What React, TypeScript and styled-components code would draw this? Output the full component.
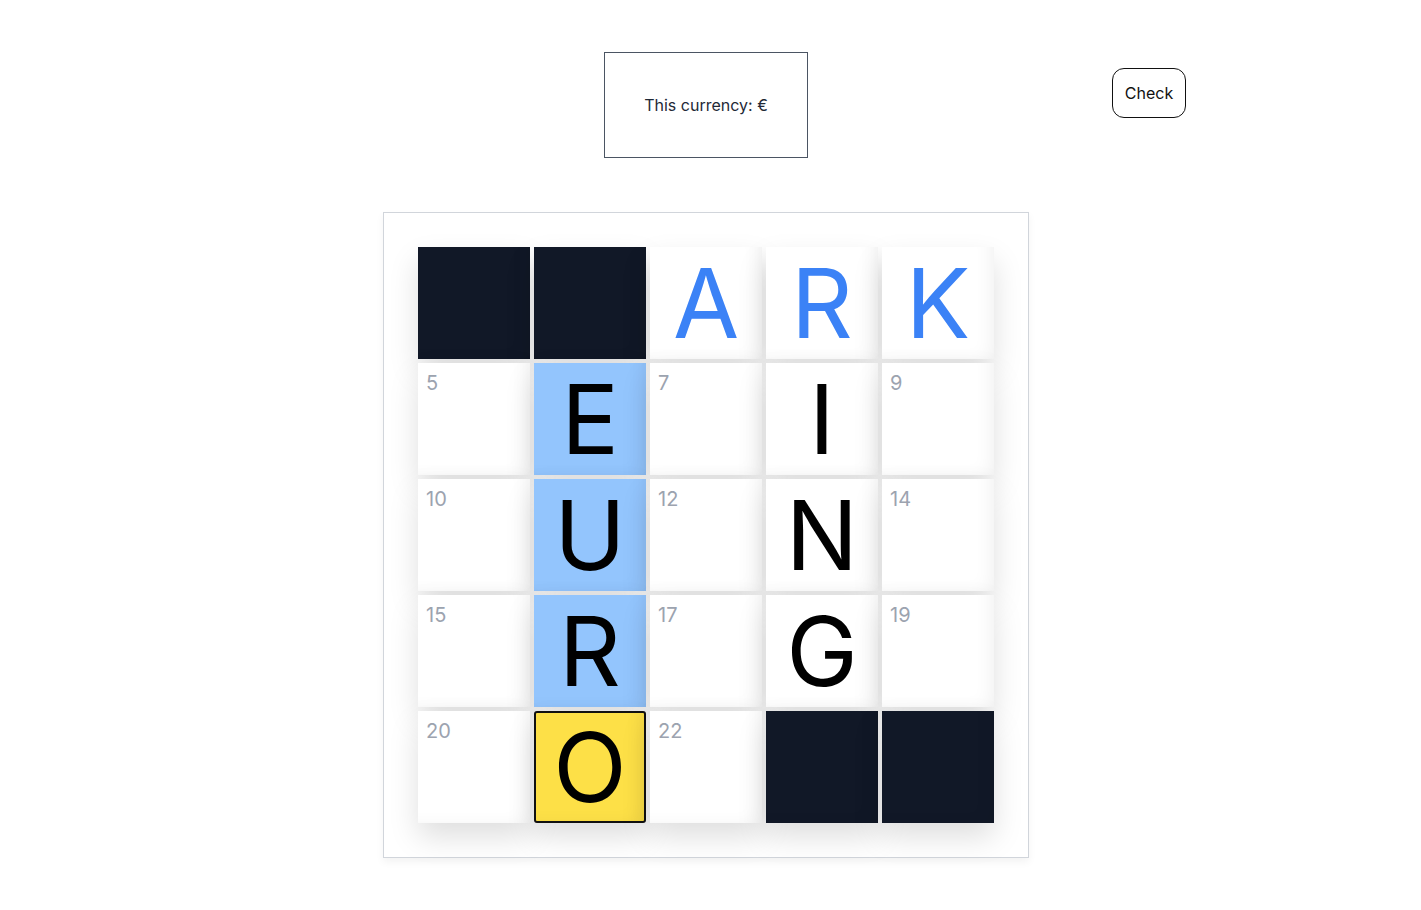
import styled, { createGlobalStyle } from "styled-components";

type CellKind = "block" | "open" | "across" | "active" | "current";

type Cell = {
  kind: CellKind;
  letter?: string;
  num?: number;
};

const rows: Cell[][] = [
  [
    { kind: "block" },
    { kind: "block" },
    { kind: "across", letter: "A" },
    { kind: "across", letter: "R" },
    { kind: "across", letter: "K" },
  ],
  [
    { kind: "open", num: 5 },
    { kind: "active", letter: "E" },
    { kind: "open", num: 7 },
    { kind: "open", letter: "I" },
    { kind: "open", num: 9 },
  ],
  [
    { kind: "open", num: 10 },
    { kind: "active", letter: "U" },
    { kind: "open", num: 12 },
    { kind: "open", letter: "N" },
    { kind: "open", num: 14 },
  ],
  [
    { kind: "open", num: 15 },
    { kind: "active", letter: "R" },
    { kind: "open", num: 17 },
    { kind: "open", letter: "G" },
    { kind: "open", num: 19 },
  ],
  [
    { kind: "open", num: 20 },
    { kind: "current", letter: "O" },
    { kind: "open", num: 22 },
    { kind: "block" },
    { kind: "block" },
  ],
];

const GlobalStyle = createGlobalStyle`
  body {
    margin: 0;
    background: #fff;
    font-family: Inter, "Liberation Sans", sans-serif;
    color: #111827;
  }
`;

const cellBg: Record<CellKind, string> = {
  block: "#111827",
  open: "#ffffff",
  across: "#ffffff",
  active: "#93c5fd",
  current: "#fde047",
};

const App = () => {
  return (
    <Page>
      <GlobalStyle />
      <TopRow>
        <Clue>This currency: €</Clue>
        <Actions>
          <CheckButton>Check</CheckButton>
        </Actions>
      </TopRow>
      <Board>
        <Grid>
          {rows.flat().map((cell, i) => (
            <Square key={i} $kind={cell.kind}>
              {cell.num && <Num>{cell.num}</Num>}
              {cell.letter && (
                <Letter $blue={cell.kind === "across"}>{cell.letter}</Letter>
              )}
            </Square>
          ))}
        </Grid>
      </Board>
    </Page>
  );
};

export default App;

const Page = styled.div`
  width: 1412px;
  padding-top: 52px;
  padding-bottom: 40px;
  display: flex;
  flex-direction: column;
  align-items: center;
`;

const TopRow = styled.div`
  width: 100%;
  display: grid;
  grid-template-columns: 1fr 204px 1fr;
`;

const Clue = styled.div`
  grid-column: 2;
  height: 106px;
  box-sizing: border-box;
  border: 1px solid #4b5563;
  display: flex;
  align-items: center;
  justify-content: center;
  font-size: 16px;
  color: #1f2937;
`;

const Actions = styled.div`
  grid-column: 3;
  padding-left: 304px;
  padding-top: 16px;
`;

const CheckButton = styled.button`
  width: 74px;
  height: 50px;
  box-sizing: border-box;
  border: 1px solid #111;
  border-radius: 12px;
  background: #fff;
  font-family: Inter, "Liberation Sans", sans-serif;
  font-size: 16px;
  color: #111;
  padding: 0;
  cursor: pointer;
`;

const Board = styled.div`
  margin-top: 54px;
  border: 1px solid #d1d5db;
  padding: 34px;
  background: #fff;
  box-shadow: 0 4px 8px rgba(0, 0, 0, 0.05);
`;

const Grid = styled.div`
  display: grid;
  grid-template-columns: repeat(5, 112px);
  grid-auto-rows: 112px;
  gap: 4px;
`;

const Square = styled.div<{ $kind: CellKind }>`
  position: relative;
  box-sizing: border-box;
  background: ${({ $kind }) => cellBg[$kind]};
  border: ${({ $kind }) => ($kind === "current" ? "2px solid #111" : "none")};
  border-radius: ${({ $kind }) => ($kind === "current" ? "3px" : "0")};
  display: flex;
  align-items: center;
  justify-content: center;
  box-shadow: inset -14px -8px 20px -14px rgba(0, 0, 0, 0.08),
    0 14px 28px rgba(0, 0, 0, 0.13);
`;

const Num = styled.span`
  position: absolute;
  top: 8px;
  left: 8px;
  font-size: 20px;
  line-height: 1.2;
  color: #9ca3af;
`;

const Letter = styled.span<{ $blue: boolean }>`
  font-size: 96px;
  line-height: 1;
  color: ${({ $blue }) => ($blue ? "#3b82f6" : "#000")};
`;
